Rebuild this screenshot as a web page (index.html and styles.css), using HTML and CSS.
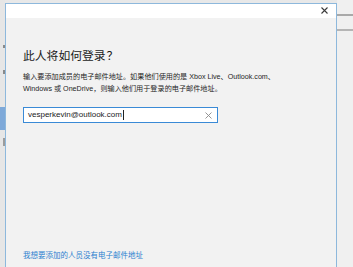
FILE: index.html
```html
<!DOCTYPE html>
<html lang="zh-CN">
<head>
<meta charset="utf-8">
<link rel="stylesheet" href="styles.css">
</head>
<body>
<div class="screen">
  <div class="left-strip">
    <div class="strip-mark strip-a"></div>
    <div class="strip-mark strip-b"></div>
    <div class="strip-sel"></div>
    <div class="strip-mark strip-c"></div>
  </div>
  <div class="dialog">
    <div class="titlebar">
      <svg class="close" width="7" height="7" viewBox="0 0 7 7"><path d="M0.5 0.5L6.5 6.5M6.5 0.5L0.5 6.5" stroke="#3a3a3a" stroke-width="1.1" fill="none"/></svg>
    </div>
    <div class="content">
      <h1 class="title">此人将如何登录<span class="qmark">？</span></h1>
      <p class="desc">输入要添加成员的电子邮件地址。如果他们使用的是 Xbox Live、Outlook.com、<br>Windows 或 OneDrive，则输入他们用于登录的电子邮件地址。</p>
      <div class="field">
        <span class="value">vesperkevin@outlook.com</span><span class="caret"></span>
        <svg class="clear" width="7" height="7" viewBox="0 0 7 7"><path d="M0.5 0.5L6.5 6.5M6.5 0.5L0.5 6.5" stroke="#8a8a8a" stroke-width="0.9" fill="none"/></svg>
      </div>
      <a class="link" href="#">我想要添加的人员没有电子邮件地址</a>
    </div>
  </div>
  <div class="right-strip">
    <div class="rline rline-a"></div>
    <div class="rline rline-b"></div>
  </div>
</div>
</body>
</html>
```
FILE: styles.css
```css
html, body {
  margin: 0;
  padding: 0;
}
body {
  width: 353px;
  height: 267px;
  overflow: hidden;
  background: #e8e8e8;
  font-family: "Liberation Sans", "Noto Sans CJK SC", sans-serif;
}
.screen {
  display: flex;
  height: 267px;
  overflow: hidden;
}
.left-strip {
  width: 5px;
  background: #e6e6e6;
  display: flex;
  flex-direction: column;
}
.strip-mark {
  width: 2px;
  margin-left: 3px;
  background: #8a8a8a;
}
.strip-a { height: 3px; margin-top: 45px; }
.strip-b { height: 4px; margin-top: 22px; }
.strip-sel {
  height: 23px;
  margin-top: 33px;
  background: #7ea9d9;
}
.strip-c { height: 8px; margin-top: 8px; background: #9c9c9c; }
.dialog {
  margin-top: 3px;
  width: 332px;
  height: 300px;
  flex-shrink: 0;
  box-sizing: border-box;
  border: 1px solid #8db8dc;
  background: #f2f2f2;
  display: flex;
  flex-direction: column;
}
.titlebar {
  height: 14px;
  background: #ffffff;
  display: flex;
  justify-content: flex-end;
  align-items: center;
  padding-right: 8px;
}
.close {
  display: block;
  margin-bottom: 1px;
}
.content {
  padding: 0 17px;
  display: flex;
  flex-direction: column;
  align-items: flex-start;
}
.title {
  margin: 29px 0 0 0;
  font-size: 11.8px;
  line-height: 15px;
  font-weight: normal;
  color: #1a1a1a;
  font-family: "Noto Sans CJK SC", sans-serif;
}
.qmark {
  font-family: "Noto Sans CJK JP", sans-serif;
  margin-left: 1px;
}
.desc {
  margin: 9px 0 0 0;
  font-size: 7.15px;
  line-height: 12px;
  color: #262626;
  white-space: nowrap;
}
.field {
  margin-top: 12px;
  width: 195px;
  height: 16px;
  box-sizing: border-box;
  border: 1px solid #3a8ad6;
  background: #ffffff;
  display: flex;
  align-items: center;
  padding: 0 5px 0 4px;
}
.value {
  font-size: 8px;
  color: #1a1a1a;
  line-height: 12px;
}
.caret {
  width: 1px;
  height: 10px;
  background: #222;
  margin-left: 1px;
}
.clear {
  margin-left: auto;
  display: block;
}
.link {
  margin-top: 127px;
  font-size: 7.5px;
  line-height: 12px;
  color: #2a7fcf;
  text-decoration: none;
}
.right-strip {
  flex: 1;
  background: #f0f0f0;
  display: flex;
  flex-direction: column;
}
.rline {
  height: 2px;
  background: #a9a9a9;
}
.rline-a { margin-top: 14px; }
.rline-b { margin-top: 13px; background: #b5b5b5; }
```
